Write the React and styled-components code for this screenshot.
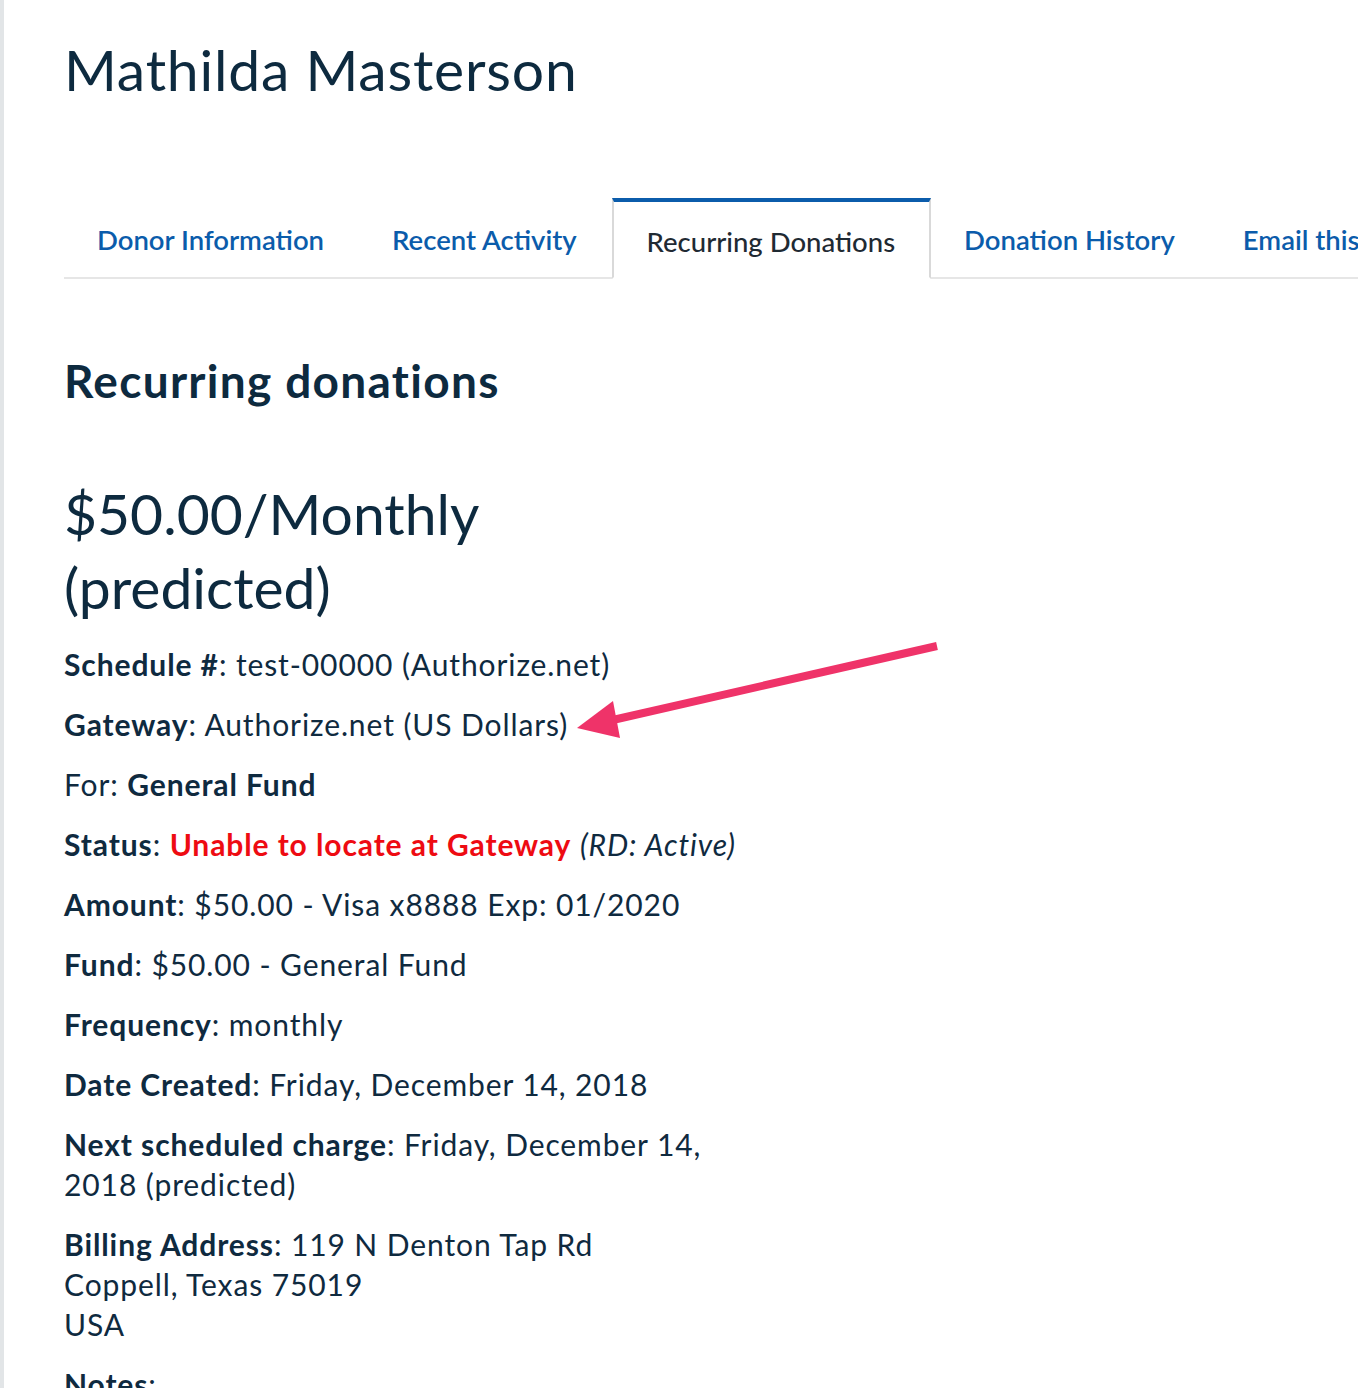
import React from 'react';
import styled, { createGlobalStyle } from 'styled-components';

const GlobalStyle = createGlobalStyle`
  html, body {
    margin: 0;
    padding: 0;
    background: #ffffff;
  }
  body {
    font-family: Lato, 'Liberation Sans', sans-serif;
    color: #0f2a3f;
  }
`;

const Page = styled.div`
  position: relative;
  min-height: 1388px;
  border-left: 4px solid #e2e5e7;
  padding: 0 0 0 60px;
  box-sizing: border-box;
  overflow: hidden;
`;

const Name = styled.h1`
  font-size: 57px;
  font-weight: 400;
  letter-spacing: 0.8px;
  line-height: 72px;
  margin: 0;
  padding-top: 33px;
  color: #0d2a3f;
`;

const TabBar = styled.ul`
  display: flex;
  list-style: none;
  margin: 93px 0 0;
  padding: 0;
  border-bottom: 2px solid #e6e6e6;
  white-space: nowrap;
`;

const Tab = styled.li`
  box-sizing: border-box;
  height: 81px;
  display: flex;
  align-items: center;
  padding: ${(p) => (p.active ? '3px 34px 0 33px' : '0 33px 0 31px')};
  margin-bottom: -2px;
  background: ${(p) => (p.active ? '#ffffff' : 'transparent')};
  border: 2px solid ${(p) => (p.active ? '#d9d9d9' : 'transparent')};
  border-top: 4px solid ${(p) => (p.active ? '#0b5cab' : 'transparent')};
  border-bottom: 2px solid ${(p) => (p.active ? '#ffffff' : 'transparent')};
  font-size: 27.5px;
  font-weight: ${(p) => (p.active ? 500 : 600)};
  color: ${(p) => (p.active ? '#1f2a33' : '#0b5cab')};
`;

const Content = styled.section`
  padding-top: 75px;
  width: 720px;
`;

const Heading = styled.h2`
  font-size: 46px;
  font-weight: 700;
  letter-spacing: 1.3px;
  line-height: 54px;
  margin: 0;
  color: #0d2a3f;
`;

const Amount = styled.div`
  font-size: 57px;
  font-weight: 400;
  line-height: 74px;
  margin-top: 68px;
  margin-bottom: 20px;
  color: #0d2a3f;
`;

const Row = styled.p`
  font-size: 30px;
  letter-spacing: 0.9px;
  line-height: 40px;
  margin: 0 0 20px;
`;

const Label = styled.strong`
  font-weight: 700;
`;

const Alert = styled.strong`
  font-weight: 700;
  color: #ee0b12;
`;

const Arrow = styled.svg`
  position: absolute;
  left: 560px;
  top: 630px;
  width: 390px;
  height: 120px;
  pointer-events: none;
`;

const rows = [
  { label: 'Schedule #', value: 'test-00000 (Authorize.net)' },
  { label: 'Gateway', value: 'Authorize.net (US Dollars)' },
];

const App = () => (
  <>
    <GlobalStyle />
    <Page>
      <Name>Mathilda Masterson</Name>
      <TabBar>
        <Tab>Donor Information</Tab>
        <Tab>Recent Activity</Tab>
        <Tab active>Recurring Donations</Tab>
        <Tab>Donation History</Tab>
        <Tab>Email this donor</Tab>
      </TabBar>
      <Content>
        <Heading>Recurring donations</Heading>
        <Amount>
          $50.00/Monthly
          <br />
          (predicted)
        </Amount>
        {rows.map((r) => (
          <Row key={r.label}>
            <Label>{r.label}</Label>: {r.value}
          </Row>
        ))}
        <Row>
          For: <Label>General Fund</Label>
        </Row>
        <Row>
          <Label>Status</Label>: <Alert>Unable to locate at Gateway</Alert>{' '}
          <em>(RD: Active)</em>
        </Row>
        <Row>
          <Label>Amount</Label>: $50.00 - Visa x8888 Exp: 01/2020
        </Row>
        <Row>
          <Label>Fund</Label>: $50.00 - General Fund
        </Row>
        <Row>
          <Label>Frequency</Label>: monthly
        </Row>
        <Row>
          <Label>Date Created</Label>: Friday, December 14, 2018
        </Row>
        <Row>
          <Label>Next scheduled charge</Label>: Friday, December 14,
          <br />
          2018 (predicted)
        </Row>
        <Row>
          <Label>Billing Address</Label>: 119 N Denton Tap Rd
          <br />
          Coppell, Texas 75019
          <br />
          USA
        </Row>
        <Row>
          <Label>Notes</Label>:
        </Row>
      </Content>
      <Arrow viewBox="0 0 390 120">
        <line x1="373" y1="16" x2="40" y2="92" stroke="#ef3369" strokeWidth="8" />
        <polygon points="13,98 49,71 56,108" fill="#ef3369" />
      </Arrow>
    </Page>
  </>
);

export default App;
